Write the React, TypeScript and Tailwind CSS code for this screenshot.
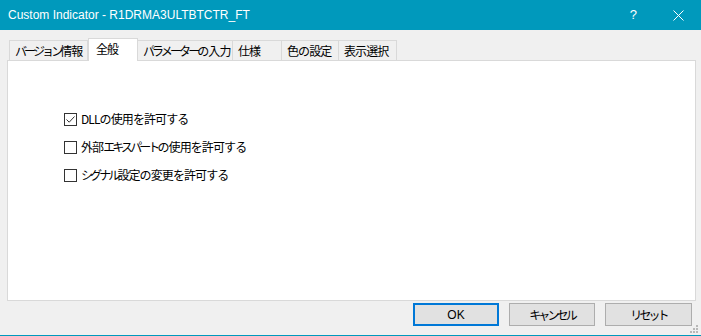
import React from "react";

const tabs = [
  { label: "バージョン情報", w: 79 },
  { label: "全般", w: 50, active: true },
  { label: "パラメーターの入力", w: 95 },
  { label: "仕様", w: 49 },
  { label: "色の設定", w: 57 },
  { label: "表示選択", w: 58 },
];

const jp = { fontFamily: '"Noto Sans CJK JP", "Noto Sans", sans-serif' };

function J({ text }: { text: string }) {
  const parts = text.match(/[\u30A0-\u30FF]+|[^\u30A0-\u30FF]+/g) || [];
  return (
    <>
      {parts.map((p, i) =>
        /[\u30A0-\u30FF]/.test(p) ? (
          <span key={i} className="tracking-[-2.9px]">{p}</span>
        ) : (
          <span key={i} className="tracking-[-0.9px]">{p}</span>
        )
      )}
    </>
  );
}

function Check({ checked, label }: { checked?: boolean; label: string }) {
  return (
    <div className="flex items-center h-[13px]">
      <div className="w-[13px] h-[13px] border border-[#333333] bg-white flex items-center justify-center">
        {checked && (
          <svg width="11" height="11" viewBox="0 0 11 11">
            <path d="M1.5 5.5 L4.2 8.2 L9.5 2.5" stroke="#333" strokeWidth="1" fill="none" />
          </svg>
        )}
      </div>
      <span className="ml-[4px] text-[12px] leading-none text-black whitespace-nowrap mt-[-2px]" style={jp}>
        <J text={label} />
      </span>
    </div>
  );
}

export default function App() {
  return (
    <div className="relative w-[701px] h-[336px] bg-[#f0f0f0] flex flex-col overflow-hidden" style={jp}>
      <div className="h-[30px] bg-[#0099bc] flex items-center shrink-0">
        <span className="ml-[8px] text-white text-[12px]" style={{ fontFamily: '"Liberation Sans", Arial, sans-serif' }}>
          Custom Indicator - R1DRMA3ULTBTCTR_FT
        </span>
        <div className="flex-1" />
        <span className="text-white text-[13px] mr-[36px]" style={{ fontFamily: '"Liberation Sans", sans-serif' }}>?</span>
        <svg width="11" height="11" viewBox="0 0 11 11" className="mr-[17px]">
          <path d="M0.5 0.5 L10.5 10.5 M10.5 0.5 L0.5 10.5" stroke="white" strokeWidth="1" />
        </svg>
      </div>
      <div className="pt-[8px] pl-[9px] flex items-end h-[30px] shrink-0">
        {tabs.map((tb) =>
          tb.active ? (
            <div
              key={tb.label}
              className="relative z-10 h-[23px] mb-[-1px] bg-white border border-b-0 border-[#d9d9d9] flex items-start pt-[1px] pl-[7px] text-[12px] text-black whitespace-nowrap"
              style={{ width: tb.w }}
            >
              <J text={tb.label} />
            </div>
          ) : (
            <div
              key={tb.label}
              className="h-[20px] bg-[#f0f0f0] border border-b-0 border-l-0 first:border-l border-[#d9d9d9] flex items-center pl-[5px] text-[12px] text-black whitespace-nowrap"
              style={{ width: tb.w }}
            >
              <J text={tb.label} />
            </div>
          )
        )}
      </div>
      <div className="ml-[7px] mr-[5px] h-[241px] bg-white border border-[#d9d9d9] shrink-0 pt-[52px] pl-[56px] flex flex-col gap-[15px]">
        <Check checked label="DLLの使用を許可する" />
        <Check label="外部エキスパートの使用を許可する" />
        <Check label="シグナル設定の変更を許可する" />
      </div>
      <div className="flex justify-end pr-[9px] pt-[2px] gap-[10px] shrink-0">
        <button className="w-[86px] h-[23px] bg-[#e1e1e1] border-2 border-[#0078d7] text-[12px] text-black flex items-center justify-center" style={{ fontFamily: '"Liberation Sans", sans-serif' }}>
          OK
        </button>
        <button className="w-[86px] h-[23px] bg-[#e1e1e1] border border-[#adadad] text-[12px] text-black flex items-center justify-center">
          <J text="キャンセル" />
        </button>
        <button className="w-[87px] h-[23px] bg-[#e1e1e1] border border-[#adadad] text-[12px] text-black flex items-center justify-center">
          <J text="リセット" />
        </button>
      </div>
      <div className="flex-1" />
      <div className="h-[1px] bg-[#0099bc] shrink-0" />
      <svg className="absolute right-[2px] bottom-[2px]" width="9" height="9" viewBox="0 0 9 9">
        <rect x="6" y="0" width="2" height="2" fill="#b8b8b8" />
        <rect x="3" y="3" width="2" height="2" fill="#b8b8b8" />
        <rect x="6" y="3" width="2" height="2" fill="#b8b8b8" />
        <rect x="0" y="6" width="2" height="2" fill="#b8b8b8" />
        <rect x="3" y="6" width="2" height="2" fill="#b8b8b8" />
        <rect x="6" y="6" width="2" height="2" fill="#b8b8b8" />
      </svg>
    </div>
  );
}
